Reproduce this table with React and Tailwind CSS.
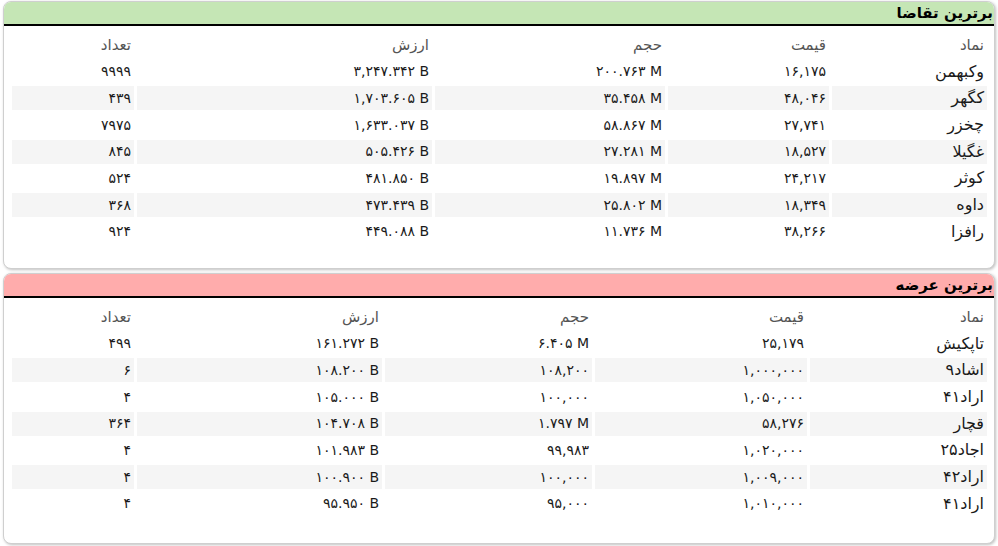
import React from "react";

const font = { fontFamily: '"DejaVu Sans", "Noto Sans", sans-serif' };

const demand = [
  ["وکبهمن", "۱۶,۱۷۵", "۲۰۰.۷۶۳ M", "۳,۲۴۷.۳۴۲ B", "۹۹۹۹"],
  ["کگهر", "۴۸,۰۴۶", "۳۵.۴۵۸ M", "۱,۷۰۳.۶۰۵ B", "۴۳۹"],
  ["چخزر", "۲۷,۷۴۱", "۵۸.۸۶۷ M", "۱,۶۳۳.۰۳۷ B", "۷۹۷۵"],
  ["غگیلا", "۱۸,۵۲۷", "۲۷.۲۸۱ M", "۵۰۵.۴۲۶ B", "۸۴۵"],
  ["کوثر", "۲۴,۲۱۷", "۱۹.۸۹۷ M", "۴۸۱.۸۵۰ B", "۵۲۴"],
  ["داوه", "۱۸,۳۴۹", "۲۵.۸۰۲ M", "۴۷۳.۴۳۹ B", "۳۶۸"],
  ["رافزا", "۳۸,۲۶۶", "۱۱.۷۳۶ M", "۴۴۹.۰۸۸ B", "۹۲۴"],
];

const supply = [
  ["تاپکیش", "۲۵,۱۷۹", "۶.۴۰۵ M", "۱۶۱.۲۷۲ B", "۴۹۹"],
  ["اشاد۹", "۱,۰۰۰,۰۰۰", "۱۰۸,۲۰۰", "۱۰۸.۲۰۰ B", "۶"],
  ["اراد۴۱", "۱,۰۵۰,۰۰۰", "۱۰۰,۰۰۰", "۱۰۵.۰۰۰ B", "۴"],
  ["قچار", "۵۸,۲۷۶", "۱.۷۹۷ M", "۱۰۴.۷۰۸ B", "۳۶۴"],
  ["اجاد۲۵", "۱,۰۲۰,۰۰۰", "۹۹,۹۸۳", "۱۰۱.۹۸۳ B", "۴"],
  ["اراد۴۲", "۱,۰۰۹,۰۰۰", "۱۰۰,۰۰۰", "۱۰۰.۹۰۰ B", "۴"],
  ["اراد۴۱", "۱,۰۱۰,۰۰۰", "۹۵,۰۰۰", "۹۵.۹۵۰ B", "۴"],
];

const headers = ["نماد", "قیمت", "حجم", "ارزش", "تعداد"];

function Card({ title, headerClass, gridClass, rows, heightClass }) {
  return (
    <div
      className={`mx-[3px] rounded-lg border border-[#cfcfcf] bg-white shadow-[1px_1px_3px_rgba(0,0,0,0.25)] overflow-hidden ${heightClass}`}
    >
      <div
        className={`h-[24px] border-b-2 border-black flex items-center justify-start pr-px ${headerClass}`}
      >
        <span className="text-[15px] font-bold text-black leading-none">{title}</span>
      </div>
      <div className={`grid ${gridClass} gap-x-[3px] gap-y-[2.7px] mt-[7px] pr-[7px] pl-[9px]`}>
        {headers.map((h, i) => (
          <div
            key={"h" + i}
            className="h-6 flex items-center justify-start pr-[3px] text-[15px] text-[#555]"
          >
            {h}
          </div>
        ))}
        {rows.map((r, ri) =>
          r.map((c, ci) => (
            <div
              key={ri + "-" + ci}
              className={`h-6 flex items-center justify-start pr-[3px] text-[#1a1a1a] ${
                ci === 0 ? "text-[16px]" : "text-[14px]"
              } ${ri % 2 === 1 ? "bg-[#f5f5f5]" : "bg-white"}`}
            >
              {ci === 0 ? <span>{c}</span> : <span dir="ltr">{c}</span>}
            </div>
          ))
        )}
      </div>
    </div>
  );
}

export default function App() {
  return (
    <div dir="rtl" className="w-[998px] h-[546px] bg-white pt-px flex flex-col gap-[4px]" style={font}>
      <Card
        title="برترین تقاضا"
        headerClass="bg-[#c5e6b5]"
        gridClass="grid-cols-[155px_161px_230px_295px_122px]"
        rows={demand}
        heightClass="h-[268px]"
      />
      <Card
        title="برترین عرضه"
        headerClass="bg-[#ffacac]"
        gridClass="grid-cols-[177px_212px_207px_245px_122px]"
        rows={supply}
        heightClass="h-[271px]"
      />
    </div>
  );
}
